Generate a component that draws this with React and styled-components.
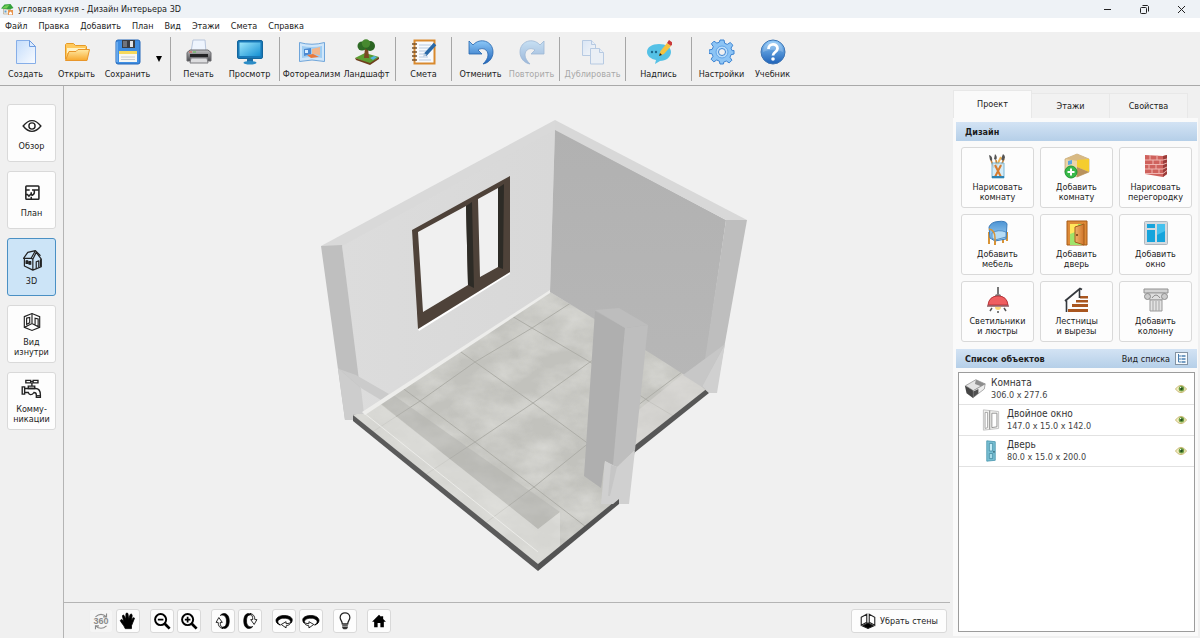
import React from 'react';
import styled, { createGlobalStyle, css } from 'styled-components';

const GlobalStyle = createGlobalStyle`
  * {
    box-sizing: border-box;
  }

  body {
    margin: 0;
    background-color: #f0f0f0;
    color: #1c1c1c;
    font-family: 'DejaVu Sans Condensed', 'Noto Sans', sans-serif;
    font-size: 9px;
    line-height: 10px;
  }

  button {
    font: inherit;
    color: inherit;
    padding: 0;
    border: 0;
    background: none;
  }

  svg {
    display: block;
  }

  h2, p, ul {
    margin: 0;
    padding: 0;
  }
`;

/* ---------- Icons ---------- */

const Icon = ({ size = 26, children }) => (
  <svg width={size} height={size} viewBox='0 0 26 26' fill='none' aria-hidden='true'>
    {children}
  </svg>
);

const GradientDefs = styled.svg`
  position: absolute;
`;

const Gradients = () => (
  <GradientDefs width='0' height='0' aria-hidden='true'>
    <defs>
      <linearGradient id='paper' x1='0' y1='0' x2='1' y2='1'>
        <stop offset='0' stopColor='#c3dcfb' />
        <stop offset='1' stopColor='#fafcff' />
      </linearGradient>
      <linearGradient id='folder' x1='0' y1='0' x2='0' y2='1'>
        <stop offset='0' stopColor='#ffe9a3' />
        <stop offset='1' stopColor='#f7a82d' />
      </linearGradient>
      <linearGradient id='blue' x1='0' y1='0' x2='0' y2='1'>
        <stop offset='0' stopColor='#8cc8f8' />
        <stop offset='1' stopColor='#1e62b8' />
      </linearGradient>
      <linearGradient id='screen' x1='0' y1='0' x2='1' y2='1'>
        <stop offset='0' stopColor='#9be6fb' />
        <stop offset='1' stopColor='#1590d4' />
      </linearGradient>
      <linearGradient id='metal' x1='0' y1='0' x2='0' y2='1'>
        <stop offset='0' stopColor='#c2c2c4' />
        <stop offset='1' stopColor='#47474b' />
      </linearGradient>
      <linearGradient id='wood' x1='0' y1='0' x2='1' y2='0'>
        <stop offset='0' stopColor='#f0b26c' />
        <stop offset='1' stopColor='#cf7428' />
      </linearGradient>
      <linearGradient id='seat' x1='0' y1='0' x2='0' y2='1'>
        <stop offset='0' stopColor='#4b93d4' />
        <stop offset='1' stopColor='#a9d7f5' />
      </linearGradient>
    </defs>
  </GradientDefs>
);

const LogoIcon = () => (
  <Icon size={13}>
    <path d='M5 12h14v10H5z' fill='#f4efe2' stroke='#9a8a70' />
    <path d='M0 11 7 3l12-1 6 8-8 3z' fill='#32a13c' />
    <path d='m3 10 6-5 8-1-6 7z' fill='#72cc55' />
    <path d='M7 15h4v4H7z' fill='#5d9ed6' />
    <path d='M14 14h10v10H14z' fill='#e79550' />
    <path d='m16 20 3-3 3 3v3h-6z' fill='#fff' />
  </Icon>
);

const NewIcon = () => (
  <Icon>
    <path d='M3.500 1.500h13l6 6v17h-19z' fill='url(#paper)' stroke='#86aee8' />
    <path d='M16.500 1.500v6h6z' fill='#dcebff' stroke='#6f9de0' />
  </Icon>
);

const OpenIcon = () => (
  <Icon>
    <path d='M1.500 20V5.500l1-1h7l2 2h10l1 1V20z' fill='#ffc95c' stroke='#e59a28' />
    <path d='M3 9h18v5H3z' fill='#fff2c4' />
    <path d='M1.500 21.500 5 12.500h7l2-2h11.500l-2.500 11z' fill='url(#folder)' stroke='#e8962a' />
  </Icon>
);

const SaveIcon = () => (
  <Icon>
    <rect x='1' y='1' width='24' height='24' rx='2' fill='#3f8ee2' stroke='#2467b8' />
    <path d='M7 1h13v8H7z' fill='#3a3d42' />
    <path d='M15 2h3v6h-3z' fill='#dfe3e8' />
    <path d='M8 2h4v6H8z' fill='#6f747c' />
    <path d='M4 12h18v11H4z' fill='#f7f7f2' />
    <path d='M4 12h18v3H4z' fill='#f5d95c' />
    <path d='M6 18h14M6 20.500h14' stroke='#c6ccd2' />
    <path d='M2 3v20' stroke='#8fc8ff' />
  </Icon>
);

const PrintIcon = () => (
  <Icon>
    <path d='m7 1 12 0 1 12H5z' fill='#eef4fd' stroke='#b9c6dc' />
    <path d='M1 13.500 4 11h18l3 2.500V22H1z' fill='url(#metal)' stroke='#6a6a6e' />
    <path d='M4 15h18v3H4z' fill='#242426' />
    <path d='M5 19h16l1 5H4z' fill='#dcdcde' stroke='#7c7c80' />
    <path d='M3 13h3' stroke='#e05848' />
    <path d='M7 13h3' stroke='#58c04e' />
  </Icon>
);

const PreviewIcon = () => (
  <Icon>
    <rect x='.5' y='1.500' width='25' height='18' rx='1.500' fill='#1979b8' stroke='#14669c' />
    <path d='M2.500 3.500h21v13.500h-21z' fill='url(#screen)' />
    <path d='M10 20h6v3h-6z' fill='#1c6ea5' />
    <ellipse cx='13' cy='23.800' rx='6.500' ry='1.800' fill='#2b8cc6' />
  </Icon>
);

const PhotoIcon = () => (
  <Icon>
    <path d='M.5 3.500Q13 7 25.500 3.500v19Q13 19.500.5 22.500z' fill='#cfe6fa' stroke='#6fa5da' />
    <path d='M3 7q10 2 20 0v12q-10-2-20 0z' fill='#9fcdf2' />
    <path d='m5 10 7-1v6l-7 2z' fill='#4b89d2' />
    <path d='m13 10 8-2v8l-8-1z' fill='#f1b68c' />
    <path d='m8 16 6-1 6 3-8 1z' fill='#e9783a' />
    <path d='M6 11h3v3H6z' fill='#d8edff' />
  </Icon>
);

const TreeIcon = () => (
  <Icon>
    <path d='M1 19 11 14l14 4-9 7z' fill='#5c9d31' />
    <path d='m1 19 15 5v2L2 21zM16 24l9-6v2l-9 6z' fill='#6d3f1c' />
    <path d='M11 9h3l1 10h-5z' fill='#7a4922' />
    <circle cx='8' cy='7' r='4.500' fill='#2f6b25' />
    <circle cx='16' cy='7' r='5' fill='#2c6523' />
    <circle cx='12' cy='4.500' r='4.200' fill='#47892f' />
    <path d='m16 19 4-2 3 1-4 3z' fill='#53b4e3' />
  </Icon>
);

const EstimateIcon = () => (
  <Icon>
    <rect x='3.500' y='1.500' width='20' height='23' fill='#f8fafd' stroke='#d98a2e' strokeWidth='2' />
    <path d='M8 6h12M8 9h12M8 12h10M8 15h8M8 18h9M8 21h12' stroke='#b8cae0' />
    <path d='M1 5h5M1 9h5M1 13h5M1 17h5M1 21h5' stroke='#77512c' strokeWidth='1.500' />
    <path d='M24 5 14 16' stroke='#2a69a8' strokeWidth='3.500' />
    <path d='m12 18 1-4 3 2z' fill='#b9ccdf' />
  </Icon>
);

const UndoShape = () => (
  <path
    d='M1 2v13h13l-4-4c4-3 10-1 10 5 0 3-2 6-5 9 6-1 10-6 10-12C25 2 12-2 5 6z'
    fill='url(#blue)'
    stroke='#2565ad'
    strokeWidth='.8'
  />
);

const UndoIcon = () => (
  <Icon>
    <UndoShape />
  </Icon>
);

const RedoIcon = () => (
  <Icon>
    <g transform='translate(26 0) scale(-1 1)' opacity='.4'>
      <UndoShape />
    </g>
  </Icon>
);

const CopyIcon = () => (
  <Icon>
    <g opacity='.5' stroke='#7fa5d6' fill='url(#paper)'>
      <path d='M2.500 1.500h9l4 4v11h-13z' />
      <path d='M11.500 1.500v4h4' />
      <path d='M10.500 9.500h9l4 4v11.500h-13z' fill='#e6effa' />
      <path d='M19.500 9.500v4h4' />
    </g>
  </Icon>
);

const NoteIcon = () => (
  <Icon>
    <path d='M1 13c0-5 5-8 12-8s12 3 12 8-5 9-11 9l-5 3 1-4c-5-1-9-4-9-8z' fill='#55c1e6' />
    <circle cx='6' cy='13' r='1.200' fill='#1d688d' />
    <circle cx='10' cy='13' r='1.200' fill='#1d688d' />
    <path d='m13 17 1.500-5L21 4l4 3-7 8z' fill='#f6c33f' />
    <path d='m21 4 2-3 4 3-2 3z' fill='#c93a3a' />
    <path d='m13 17 1-3 2 2z' fill='#222' />
  </Icon>
);

const GearIcon = () => (
  <Icon>
    <g stroke='#3d84d2' strokeWidth='1'>
      <path
        d='M11 1h4l.7 3.300 2.600 1.100 2.900-1.900 2.700 2.700-1.900 2.900 1.100 2.600L25 11.500v3.500l-3 .7-1 2.600 1.900 2.900-2.700 2.700-2.900-1.900-2.600 1.100L14.500 25h-3.500l-.7-2.900-2.600-1.100-2.900 1.900-2.700-2.700L4 17.300l-1.100-2.600L0 14.500V11l3.200-.7 1.100-2.600-1.900-2.900L5 2.200l2.900 1.900 2.500-1z'
        fill='#8cc4f5'
      />
      <circle cx='13' cy='13' r='6' fill='#b7dcfb' stroke='#62a4e6' />
      <circle cx='13' cy='13' r='3.500' fill='#f0f0f0' />
    </g>
  </Icon>
);

const HelpIcon = () => (
  <Icon>
    <circle cx='13' cy='13' r='12' fill='url(#blue)' stroke='#3f75b4' />
    <path d='M3 13C3-1 23-1 23 13c-7-3-13-3-20 0z' fill='#fff' opacity='.2' />
    <path d='M8.500 10c0-6 9-6 9-.5 0 3.500-4.500 3.500-4.500 7' stroke='#fff' strokeWidth='2.800' />
    <circle cx='13' cy='20' r='1.800' fill='#fff' />
  </Icon>
);

const EyeIcon = () => (
  <Icon size={20}>
    <g stroke='#222' strokeWidth='1.800'>
      <path d='M1.500 13Q7 6 13 6t11.500 7Q19 20 13 20T1.500 13z' />
      <circle cx='13' cy='13' r='4' />
    </g>
  </Icon>
);

const PlanIcon = () => (
  <Icon size={20}>
    <g stroke='#222' strokeWidth='2'>
      <rect x='5' y='4' width='17' height='17' rx='1' />
      <path d='M5 9h5M13 9h9M16 9v4q-1 3-4 3M5 15h2l2 2 3-3v-2M12 18v3' />
    </g>
  </Icon>
);

const HouseIcon = () => (
  <Icon size={22}>
    <g stroke='#222' strokeWidth='1.400' strokeLinejoin='round'>
      <path d='m3 11 5-7 9-2-5 9z' />
      <path d='M4 11v9l10 5V12l4-8 6 8v9l-10 4' />
      <path d='m12 11 2 1M18 23v-8l3-1v8M23 12v9M17 2l6 6' />
      <path d='M6 14h2v3H6zM9.500 15h2v3h-2z' fill='#222' />
    </g>
  </Icon>
);

const InsideIcon = () => (
  <Icon size={20}>
    <g stroke='#222' strokeWidth='1.500'>
      <path d='M3 6 13 2l10 4v14l-10 4-10-4z' />
      <path d='m3 20 10-5 10 5M13 2v13M6 8l4-1v7l-4 2zM17 17V8l4 1v10' />
    </g>
  </Icon>
);

const TapIcon = () => (
  <Icon size={21}>
    <g stroke='#222' strokeWidth='1.700'>
      <path d='M6 3h6v3H6zM15 3h6v3h-6zM12 4.500h3M13.500 6v4M9 10h8v3H9z' />
      <path d='M1.500 11h3v9h-3zM4.500 13H18c5 0 6 3 6 8v3h-5v-3c0-2-1-3-3-3-3 4-6 3-7 0H4.500' />
      <path d='M18.500 22h6' />
    </g>
  </Icon>
);

const BrushesIcon = () => (
  <Icon>
    <path d='m9 15-3-8M12 15l-1-8M15 15l4-9' stroke='#c9853a' strokeWidth='1.600' />
    <path d='M4 2q4 1 3 6L5 7zM10 1q3 3 1 6l-2-1zM18 1q4 3 0 7l-2-2z' fill='#555' />
    <path d='M12 12 16 4' stroke='#efb04d' strokeWidth='2' />
    <path d='M7 10h12v15H7z' fill='#cbe8f8' opacity='.8' stroke='#5ba5cb' />
    <path d='m10 12 6 12M16 12l-6 12' stroke='#d77b2d' strokeWidth='2' />
    <path d='M7 24h12' stroke='#2e84b4' strokeWidth='2' />
  </Icon>
);

const AddRoomIcon = () => (
  <Icon>
    <path d='M1 6 13 1l12 5v13l-12 5-12-5z' fill='#ecd5a7' stroke='#b49460' strokeWidth='.6' />
    <path d='m1 6 12-5 12 5-11 2z' fill='#d8b983' />
    <path d='m13 7 12-1v13l-12-5z' fill='#f5cd2e' />
    <path d='m13 14 12 5-12 5z' fill='#b9925c' />
    <path d='m4 8 4-1v4l-4 1z' fill='#5fa6dd' />
    <circle cx='7' cy='19' r='6' fill='#38b948' stroke='#1f9632' />
    <path d='M7 15.500v7M3.500 19h7' stroke='#fff' strokeWidth='2' />
  </Icon>
);

const BricksIcon = () => (
  <Icon>
    <path d='m2 2 18 1 4-1v19l-4 3-18-3z' fill='#cf625d' />
    <path d='M20 3l4-1v19l-4 3z' fill='#9b3c3a' />
    <path
      d='M2 7h18l4-1M2 11.500h18l4-1.500M2 16h18l4-2M2 20.500h18l4-3M7 2v5M14 2v5M10 7v4.500M17 7v4.500M6 11.500V16M13 11.500V16M9 16v4.500M16 16v4.500'
      stroke='#f0b5b0'
    />
  </Icon>
);

const ChairIcon = () => (
  <Icon>
    <path d='M4 12v12M22 12v9M10 15v10M18 18v5' stroke='#d99436' strokeWidth='2' />
    <path d='M4 7Q6 2 13 1.500q8-1 9 2.500l-1 15-11 2-5-3z' fill='url(#seat)' stroke='#3c7cba' />
    <path d='M7 13q6-4 14-1v5l-11 3-3-2z' fill='#b5dcf6' stroke='#4382bd' strokeWidth='.8' />
    <path d='M4 9q6 1 6 9v7' stroke='#d99436' strokeWidth='1.500' />
  </Icon>
);

const DoorIcon = () => (
  <Icon>
    <path d='M3 1h20v24H3z' fill='#dd8a37' stroke='#a75b18' />
    <path d='M6 4h14v21H6z' fill='#9fe36a' />
    <path d='M6 4h8v7l-8 3z' fill='#ffe65c' />
    <path d='m11 7 9-3v21l-9-3z' fill='url(#wood)' stroke='#a45c1d' />
    <circle cx='13' cy='15' r='1' fill='#6d3c10' />
  </Icon>
);

const WindowIcon = () => (
  <Icon>
    <rect x='1.500' y='1.500' width='23' height='23' rx='1' fill='#d4dadf' stroke='#aeb7bf' />
    <path d='M4 4h8v4H4zM4 10h8v12H4zM14 4h8v18h-8z' fill='#16a4dc' />
    <path d='M14 4h8v7l-8 4z' fill='#44c1ee' />
  </Icon>
);

const LampIcon = () => (
  <Icon>
    <path d='M13 0v7' stroke='#555' strokeWidth='1.600' />
    <path d='M10 9q0-2 3-2t3 2z' fill='#777' />
    <path d='M3 18q1-9 10-9t10 9z' fill='#ef5f60' stroke='#b63238' />
    <path d='M2 19h22' stroke='#74333a' strokeWidth='1.200' />
    <path d='M10 20h6q0 3-3 3t-3-3z' fill='#f8d77a' />
    <path d='M7 21l-2 3M13 24v2M19 21l2 3' stroke='#555' strokeWidth='1.500' />
  </Icon>
);

const StairsIcon = () => (
  <Icon>
    <path d='M16 9h8v2.500h-8zM12 13h12v2.500H12zM8 17h16v3H8zM4 22h20v3H4z' fill='#a9561f' />
    <path d='M2.500 25V13.500M15.500 2v9' stroke='#34383d' strokeWidth='1.600' />
    <path d='M1 14 16 1.500l2 1' stroke='#34383d' strokeWidth='1.800' />
  </Icon>
);

const ColumnIcon = () => (
  <Icon>
    <path d='M1 2h24v4H1z' fill='#d3d3d3' stroke='#919191' />
    <path d='M4 6h18l-3 7H7z' fill='#dedede' stroke='#a0a0a0' />
    <circle cx='4.500' cy='9.500' r='3' fill='#ccc' stroke='#8e8e8e' />
    <circle cx='21.500' cy='9.500' r='3' fill='#ccc' stroke='#8e8e8e' />
    <path d='M9 11q4-6 8 0' stroke='#8e8e8e' />
    <path d='M7 13h12v11H7z' fill='#e3e3e3' stroke='#999' />
    <path d='M10 14v10M13 14v10M16 14v10' stroke='#a5a5a5' />
  </Icon>
);

const Rotate360Icon = () => (
  <Icon size={18}>
    <g stroke='#8a8a8a' strokeWidth='1.600'>
      <path d='M5 7q8-7 16 0M21 2v5h-5M21 20q-8 7-16 0M5 25v-5h5' />
    </g>
    <text x='13' y='18' fontSize='13' fontWeight='bold' textAnchor='middle' fill='#8a8a8a' fontFamily='Liberation Sans'>
      360
    </text>
  </Icon>
);

const HandIcon = () => (
  <Icon size={18}>
    <path
      d='M9 24C7 18 2 15 2 12c1-2 3-1 5 2L5 6c0-2 2-2 3 0l2 5V3c0-2 3-2 3 0l1 8 2-7c1-2 3-1 3 1l-1 8 2-4c1-1 3-1 2 1l-4 10v4z'
      fill='#000'
      stroke='#000'
      strokeWidth='1.200'
    />
  </Icon>
);

const ZoomGlyph = ({ plus }) => (
  <Icon size={18}>
    <circle cx='11' cy='11' r='8' stroke='#000' strokeWidth='2.800' />
    <path d='m17 17 7 7' stroke='#000' strokeWidth='4' />
    <path d={plus ? 'M7 11h8M11 7v8' : 'M7 11h8'} stroke='#000' strokeWidth='2.500' />
  </Icon>
);

const TiltGlyph = ({ down }) => (
  <Icon size={18}>
    <g transform={down ? 'rotate(180 13 13)' : undefined}>
      <path d='M9 5C13 0 22 1 22 13c0 10-6 13-11 9 6 0 7-4 7-9 0-6-3-10-9-8z' fill='#000' stroke='#000' />
      <path d='M13 24C8 23 6 20 6 15H3l4-7 5 7H9c0 4 1 7 4 9z' fill='#fff' stroke='#000' strokeWidth='1.200' />
    </g>
  </Icon>
);

const OrbitGlyph = ({ right }) => (
  <Icon size={18}>
    <g transform={right ? 'translate(26 0) scale(-1 1)' : undefined}>
      <path d='M4 17C-2 12 3 5 13 5s15 5 10 11c0-5-4-7-10-7S3 12 4 17z' fill='#000' stroke='#000' />
      <path d='M24 14q-3 6-8 6v3l-7-5 7-4v3q5 0 8-3z' fill='#fff' stroke='#000' strokeWidth='1.200' />
      <path d='M3 14q1 4 5 5' stroke='#000' strokeWidth='2' />
    </g>
  </Icon>
);

const BulbIcon = () => (
  <Icon size={18}>
    <path d='M9 17c0-4-3-5-3-9 0-9 14-9 14 0 0 4-3 5-3 9z' stroke='#222' strokeWidth='1.800' />
    <path d='M9 18h8v5l-2 2h-4l-2-2z' fill='#333' />
    <path d='M9 20.500h8' stroke='#fff' />
  </Icon>
);

const HomeIcon = () => (
  <Icon size={18}>
    <path d='M13 4 3 14h3v8h5v-6h4v6h5v-8h3l-4-4V6h-3v1z' fill='#000' />
  </Icon>
);

const WallsIcon = () => (
  <Icon size={16}>
    <g stroke='#222' strokeWidth='1.800'>
      <path d='M2 7 11 2v13l-9 5zM15 2l9 5v13l-9-5z' />
      <path d='m4 21 9-5 9 5-9 4z' fill='#000' />
    </g>
  </Icon>
);

const TreeListIcon = () => (
  <Icon size={13}>
    <rect x='1' y='1' width='24' height='24' fill='#f6fafd' stroke='#8493a2' strokeWidth='2' />
    <path d='M7 4v16M7 8h5M7 14h5M7 20h5' stroke='#4b7fb0' strokeWidth='2' />
    <path d='M13 8h8M13 14h8M13 20h8' stroke='#4b7fb0' strokeWidth='3' />
  </Icon>
);

const VisibleIcon = () => (
  <Icon size={12}>
    <path d='M1 13Q7 5 13 5t12 8Q19 21 13 21T1 13z' fill='#f1edbf' stroke='#c4b46c' strokeWidth='2' />
    <circle cx='14' cy='12.500' r='6' fill='#6f9d42' />
    <circle cx='14' cy='12.500' r='3' fill='#23501f' />
    <circle cx='12' cy='10' r='1.500' fill='#fff' />
  </Icon>
);

const RoomThumb = () => (
  <Icon size={22}>
    <path d='M2 9 14 2l11 5-14 8z' fill='#e4e4e4' stroke='#999' />
    <path d='M14 2 25 7l-4 3-8-3z' fill='#8d8d8d' />
    <path d='m1 9 10 6v9L3 18z' fill='#454545' />
    <path d='m11 15 14-8-1 6-13 10z' fill='#eee' stroke='#888' strokeWidth='.8' />
    <path d='m11 16 6-3v5l-6 5z' fill='#505050' />
  </Icon>
);

const WindowThumb = () => (
  <Icon size={22}>
    <path d='m4 1 18 2v20L4 25z' fill='#f3f3f1' stroke='#bbb' />
    <path d='M6 4h3v18l-3 1z' fill='#fff' stroke='#999' />
    <path d='M14 5h6v16l-6 1z' fill='#fff' stroke='#888' />
    <path d='M11.500 2v22' stroke='#777' />
  </Icon>
);

const DoorThumb = () => (
  <Icon size={22}>
    <path d='m8 1 10 1v22l-10 1z' fill='#79bfd3' stroke='#4b98b0' />
    <path d='M11 4h4v9h-4z' fill='#c4ebf5' stroke='#438da4' />
    <path d='M11 16h4v6h-4z' fill='#a6dae8' stroke='#438da4' />
    <circle cx='16.500' cy='14' r='1' fill='#315f6e' />
  </Icon>
);

/* ---------- 3D room ---------- */

const floorOutline = '550,292 707,386 709,389 636,449 619,499 538,566 353,415 364,412';

function RoomScene() {
  return (
    <Scene viewBox='64 86 886 516' role='img' aria-label='3D'>
      <defs>
        <clipPath id='floorClip'>
          <polygon points={floorOutline} />
        </clipPath>
        <filter id='concrete' x='0' y='0' width='100%' height='100%'>
          <feTurbulence type='fractalNoise' baseFrequency='.025 .04' numOctaves='4' seed='7' />
          <feColorMatrix values='0 0 0 0 .84  0 0 0 0 .84  0 0 0 0 .81  1.600 0 0 0 -.5' />
        </filter>
        <linearGradient id='leftFace' x1='0' y1='0' x2='1' y2='0'>
          <stop offset='0' stopColor='#dcdcdc' />
          <stop offset='1' stopColor='#d8d8d8' />
        </linearGradient>
        <linearGradient id='rightFace' x1='0' y1='0' x2='0' y2='1'>
          <stop offset='0' stopColor='#b1b1b1' />
          <stop offset='1' stopColor='#b7b7b7' />
        </linearGradient>
      </defs>

      {/* floor */}
      <polygon points={floorOutline} fill='#c2c2bd' />
      <g clipPath='url(#floorClip)'>
        <rect x='340' y='285' width='380' height='290' filter='url(#concrete)' opacity='.6' />
        <g fill='none' stroke='#adada7' strokeWidth='1'>
          <path d='M382 373 420 401 475 442 534 487 590 530' />
          <path d='M440 337 475 362 533 403 586 442 640 482' />
          <path d='M500 309 532 328 590 362 650 402 690 426' />
          <path d='M360 440 420 401 475 362 532 328 580 297' />
          <path d='M425 475 475 442 533 403 590 362 640 330' />
          <path d='M484 524 534 487 585 446 650 396 690 366' />
        </g>
        <path d='M389 392 560 512 538 529 355 383z' fill='#b2b1ae' opacity='.5' />
        <path d='M340 372 538 529 560 512V547L538 568 345 415z' fill='#e2e2e0' opacity='.6' />
        <path d='M364 413 538 552' stroke='#ecece9' strokeWidth='1' />
        <path d='M636 412 712 350V392L620 470z' fill='#dfdddb' opacity='.5' />
      </g>
      <path d='M353 415 538 564 538 571 353 421z' fill='#5a5a5a' />
      <path d='M538 564 619 498V504L538 571z' fill='#535353' />
      <path d='M634 446 709 387V393L634 453z' fill='#575757' />

      {/* left wall */}
      <path d='M342 245 555 128 550 292 361 414z' fill='url(#leftFace)' />
      <path d='M321 246 555 120V130L342 246z' fill='#d9d9d9' />
      <path d='M321 246 342 245 363 412 354 415 345 420z' fill='#bfbfbf' />
      <path d='M338 368 361 388 364 414 353 414V420H345z' fill='#cdcdcd' />
      <path d='M339 369 356 375 389 394 381 400 361 388z' fill='#cbcbcb' />
      <path d='M550 290V293L365 415 362 412z' fill='#ededeb' />

      {/* window */}
      <path d='M418 329 510 272V274L419 331z' fill='#fff' />
      <path d='M412 230 510 176V272L418 329z' fill='#4e4239' />
      <path d='M418 232 466 206 468 285 423 312zM478 199 498 188V267L480 277z' fill='#f0f0f0' />
      <path d='M466 206 472 202 474 288 468 285zM498 188 504 184 503 269 498 267z' fill='#2d2b26' />

      {/* right wall */}
      <path d='M555 129 726 220 702 386 650 353 550 292z' fill='url(#rightFace)' />
      <path d='M555 120 747 220H726L555 130z' fill='#d8d8d8' />
      <path d='M726 220H747L716 393H709L701 386z' fill='#bebebe' />
      <path d='M725 344 717 393H709L702 386z' fill='#d0d0d0' />
      <path d='M725 344 683 375 702 387z' fill='#c7c7c7' />

      {/* wall stub by the doorway */}
      <path d='M595 311 625 328 615 467 605 461 601 488 584 476z' fill='#afafaf' />
      <path d='M595 310 619 308 648 325 625 328z' fill='#bdbdbd' />
      <path d='M625 328 648 325 635 450 617 467 613 465z' fill='#bebebe' />
      <path d='M605 461 617 467 635 450 629 504H619V499L613 504H601z' fill='#d0d0d0' />
      <path d='M611 465 617 467 610 496 608 496z' fill='#c6c6c6' />
    </Scene>
  );
}

/* ---------- Data ---------- */

const menu = ['Файл', 'Правка', 'Добавить', 'План', 'Вид', 'Этажи', 'Смета', 'Справка'];

const toolGroups = [
  {
    padding: '0 5px 0 0',
    more: true,
    tools: [
      { label: 'Создать', icon: NewIcon },
      { label: 'Открыть', icon: OpenIcon },
      { label: 'Сохранить', icon: SaveIcon },
    ],
  },
  {
    padding: '0 4px 0 2px',
    tools: [
      { label: 'Печать', icon: PrintIcon },
      { label: 'Просмотр', icon: PreviewIcon },
    ],
  },
  {
    padding: '0 1px 0 4px',
    wide: true,
    tools: [
      { label: 'Фотореализм', icon: PhotoIcon },
      { label: 'Ландшафт', icon: TreeIcon },
    ],
  },
  { padding: '0 2px', tools: [{ label: 'Смета', icon: EstimateIcon }] },
  {
    padding: '0 2px 0 3px',
    tools: [
      { label: 'Отменить', icon: UndoIcon },
      { label: 'Повторить', icon: RedoIcon, disabled: true },
    ],
  },
  { padding: '0 5px', wide: true, tools: [{ label: 'Дублировать', icon: CopyIcon, disabled: true }] },
  { padding: '0 5px', wide: true, tools: [{ label: 'Надпись', icon: NoteIcon }] },
  {
    padding: '0 4px',
    tools: [
      { label: 'Настройки', icon: GearIcon },
      { label: 'Учебник', icon: HelpIcon },
    ],
  },
];

const views = [
  { lines: ['Обзор'], icon: EyeIcon },
  { lines: ['План'], icon: PlanIcon },
  { lines: ['3D'], icon: HouseIcon, active: true },
  { lines: ['Вид', 'изнутри'], icon: InsideIcon },
  { lines: ['Комму-', 'никации'], icon: TapIcon },
];

const designTools = [
  { lines: ['Нарисовать', 'комнату'], icon: BrushesIcon },
  { lines: ['Добавить', 'комнату'], icon: AddRoomIcon },
  { lines: ['Нарисовать', 'перегородку'], icon: BricksIcon },
  { lines: ['Добавить', 'мебель'], icon: ChairIcon },
  { lines: ['Добавить', 'дверь'], icon: DoorIcon },
  { lines: ['Добавить', 'окно'], icon: WindowIcon },
  { lines: ['Светильники', 'и люстры'], icon: LampIcon },
  { lines: ['Лестницы', 'и вырезы'], icon: StairsIcon },
  { lines: ['Добавить', 'колонну'], icon: ColumnIcon },
];

const cameraGroups = [
  [
    { name: 'Поворот 360', icon: <Rotate360Icon />, disabled: true },
    { name: 'Переместить', icon: <HandIcon /> },
  ],
  [
    { name: 'Уменьшить', icon: <ZoomGlyph /> },
    { name: 'Увеличить', icon: <ZoomGlyph plus /> },
  ],
  [
    { name: 'Наклон вверх', icon: <TiltGlyph /> },
    { name: 'Наклон вниз', icon: <TiltGlyph down /> },
  ],
  [
    { name: 'Вращать влево', icon: <OrbitGlyph /> },
    { name: 'Вращать вправо', icon: <OrbitGlyph right /> },
  ],
  [{ name: 'Освещение', icon: <BulbIcon /> }],
  [{ name: 'Исходный вид', icon: <HomeIcon /> }],
];

const objects = [
  { name: 'Комната', size: '306.0 x 277.6', icon: RoomThumb },
  { name: 'Двойное окно', size: '147.0 x 15.0 x 142.0', icon: WindowThumb, nested: true },
  { name: 'Дверь', size: '80.0 x 15.0 x 200.0', icon: DoorThumb, nested: true },
];

const Lines = ({ lines }) => (
  <span>
    {lines.map((line, i) => (
      <React.Fragment key={line}>
        {i > 0 && <br />}
        {line}
      </React.Fragment>
    ))}
  </span>
);

/* ---------- App ---------- */

function App() {
  return (
    <Shell>
      <GlobalStyle />
      <Gradients />

      <TitleBar>
        <LogoIcon />
        <Title>угловая кухня - Дизайн Интерьера 3D</Title>
        <WindowButton aria-label='Свернуть'>
          <svg width='9' height='9' stroke='#222'>
            <path d='M1 4.500h7' />
          </svg>
        </WindowButton>
        <WindowButton aria-label='Восстановить'>
          <svg width='9' height='9' fill='none' stroke='#222'>
            <rect x='.5' y='2.500' width='6' height='6' rx='1' />
            <path d='M2.500.5h5l1 1v5' />
          </svg>
        </WindowButton>
        <WindowButton aria-label='Закрыть'>
          <svg width='9' height='9' stroke='#222'>
            <path d='m1 1 7 7M8 1 1 8' />
          </svg>
        </WindowButton>
      </TitleBar>

      <MenuBar>
        {menu.map((item) => (
          <button key={item}>{item}</button>
        ))}
      </MenuBar>

      <Toolbar>
        {toolGroups.map((group, i) => (
          <ToolGroup key={i} $padding={group.padding}>
            {group.tools.map(({ label, icon: ToolIcon, disabled }) => (
              <ToolButton key={label} $wide={group.wide} disabled={disabled}>
                <ToolIcon />
                {label}
              </ToolButton>
            ))}
            {group.more && (
              <MoreButton aria-label='Ещё'>
                <svg width='6' height='6'>
                  <path d='M0 0h6L3 6z' />
                </svg>
              </MoreButton>
            )}
          </ToolGroup>
        ))}
      </Toolbar>

      <Workspace>
        <ViewBar>
          {views.map(({ lines, icon: ViewIcon, active }) => (
            <ViewButton key={lines[0]} $active={active}>
              <ViewIcon />
              <Lines lines={lines} />
            </ViewButton>
          ))}
        </ViewBar>

        <Stage>
          <RoomScene />
          <CameraBar>
            {cameraGroups.map((group, i) => (
              <CameraGroup key={i}>
                {group.map(({ name, icon, disabled }) => (
                  <CameraButton key={name} aria-label={name} disabled={disabled}>
                    {icon}
                  </CameraButton>
                ))}
              </CameraGroup>
            ))}
            <WallsButton>
              <WallsIcon />
              Убрать стены
            </WallsButton>
          </CameraBar>
        </Stage>

        <SidePanel>
          <Tabs role='tablist'>
            <Tab role='tab' aria-selected='true' $active>
              Проект
            </Tab>
            <Tab role='tab'>Этажи</Tab>
            <Tab role='tab'>Свойства</Tab>
          </Tabs>
          <PanelBody>
            <PanelHeader>
              <h2>Дизайн</h2>
            </PanelHeader>
            <TileGrid>
              {designTools.map(({ lines, icon: TileIcon }) => (
                <Tile key={lines.join()}>
                  <TileIcon />
                  <Lines lines={lines} />
                </Tile>
              ))}
            </TileGrid>
            <PanelHeader>
              <h2>Список объектов</h2>
              <ListMode>
                Вид списка
                <TreeListIcon />
              </ListMode>
            </PanelHeader>
            <ObjectList>
              {objects.map(({ name, size, icon: Thumb, nested }) => (
                <ObjectRow key={name} $nested={nested}>
                  <Thumb />
                  <ObjectText>
                    <strong>{name}</strong>
                    <p>{size}</p>
                  </ObjectText>
                  <button aria-label={`Показать: ${name}`}>
                    <VisibleIcon />
                  </button>
                </ObjectRow>
              ))}
            </ObjectList>
          </PanelBody>
        </SidePanel>
      </Workspace>
    </Shell>
  );
}

const Shell = styled.div`
  display: flex;
  flex-direction: column;
  min-height: 100vh;
`;

const TitleBar = styled.header`
  display: flex;
  align-items: center;
  height: 18px;
  padding-left: 1px;
  background-color: #eef2f6;
`;

const Title = styled.span`
  flex: 1;
  padding-left: 4px;
`;

const WindowButton = styled.button`
  display: flex;
  align-items: center;
  justify-content: center;
  width: 37px;
  height: 18px;
`;

const MenuBar = styled.nav`
  display: flex;
  align-items: center;
  gap: 11px;
  height: 14px;
  padding-left: 5px;
  padding-top: 1px;
  background-color: #fff;
`;

const Toolbar = styled.div`
  display: flex;
  height: 54px;
  padding: 5px 0 4px;
  border-bottom: 1px solid #a9a9a9;
`;

const ToolGroup = styled.div`
  display: flex;
  padding: ${({ $padding }) => $padding};

  &:not(:last-child) {
    border-right: 1px solid #a6a6a6;
  }
`;

const ToolButton = styled.button`
  display: flex;
  flex-direction: column;
  align-items: center;
  gap: 4px;
  width: ${({ $wide }) => ($wide ? '55px' : '51px')};
  padding-top: 2px;
  white-space: nowrap;

  &:disabled {
    color: #a8a8a8;
  }
`;

const MoreButton = styled.button`
  display: flex;
  align-items: center;
  justify-content: center;
  width: 12px;
`;

const Workspace = styled.main`
  display: grid;
  grid-template-columns: 64px 1fr 250px;
  flex: 1;
`;

const ViewBar = styled.aside`
  display: flex;
  flex-direction: column;
  gap: 9px;
  padding: 18px 7px;
  border-right: 1px solid #b4b4b4;
`;

const card = css`
  background-color: #fdfdfd;
  border: 1px solid #d9d9d9;
  border-radius: 3px;
`;

const ViewButton = styled.button`
  ${card}
  display: flex;
  flex-direction: column;
  align-items: center;
  justify-content: center;
  gap: 5px;
  height: 58px;

  ${({ $active }) =>
    $active &&
    css`
      background-color: #cce4f7;
      border-color: #4a90c4;
    `}
`;

const Stage = styled.section`
  display: flex;
  flex-direction: column;
  min-width: 0;
`;

const Scene = styled.svg`
  flex: 1;
  width: 100%;
  min-height: 0;
`;

const CameraBar = styled.div`
  display: flex;
  align-items: center;
  gap: 10px;
  height: 36px;
  padding: 0 3px 0 25px;
  border-top: 1px solid #b4b4b4;
`;

const CameraGroup = styled.div`
  display: flex;
  gap: 3px;
`;

const CameraButton = styled.button`
  ${card}
  display: flex;
  align-items: center;
  justify-content: center;
  width: 24px;
  height: 24px;

  &:disabled {
    background-color: #f5f5f5;
    border-color: #efefef;
  }
`;

const WallsButton = styled.button`
  ${card}
  display: flex;
  align-items: center;
  gap: 4px;
  height: 24px;
  margin-left: auto;
  padding: 0 8px;
`;

const SidePanel = styled.aside`
  display: flex;
  flex-direction: column;
  padding: 4px 2px 2px 3px;
`;

const Tabs = styled.div`
  display: flex;
  align-items: flex-end;
  height: 28px;
  padding-right: 10px;
`;

const Tab = styled.button`
  flex: 1;
  height: 25px;
  background-color: #f2f2f2;
  border: 1px solid #e8e8e8;
  border-width: 1px 1px 0 0;

  ${({ $active }) =>
    $active &&
    css`
      height: 28px;
      background-color: #fafafa;
      border-left-width: 1px;
      padding-bottom: 2px;
    `}
`;

const PanelBody = styled.div`
  display: flex;
  flex: 1;
  flex-direction: column;
  padding: 4px 1px 4px 3px;
  background-color: #fafafa;
`;

const PanelHeader = styled.div`
  display: flex;
  align-items: center;
  justify-content: space-between;
  height: 19px;
  padding: 0 9px;
  background: linear-gradient(#d3e3f4, #b5cfe8);

  h2 {
    font-size: 9px;
    font-weight: bold;
  }
`;

const TileGrid = styled.div`
  display: grid;
  grid-template-columns: repeat(3, 1fr);
  gap: 6px;
  padding: 6px 5px 7px;
`;

const Tile = styled.button`
  ${card}
  display: flex;
  flex-direction: column;
  align-items: center;
  gap: 3px;
  height: 61px;
  padding-top: 5px;
`;

const ListMode = styled.button`
  display: flex;
  align-items: center;
  gap: 5px;
`;

const ObjectList = styled.ul`
  flex: 1;
  margin: 4px 2px 0;
  background-color: #fff;
  border: 1px solid #9c9c9c;
  list-style: none;
`;

const ObjectRow = styled.li`
  display: flex;
  align-items: center;
  height: 31px;
  padding: 0 7px 0 ${({ $nested }) => ($nested ? '21px' : '5px')};
  border-bottom: 1px solid #e2e2e2;

  &:first-child {
    height: 32px;
  }
`;

const ObjectText = styled.div`
  flex: 1;
  padding-left: 5px;
  color: #444;
  line-height: 12px;

  strong {
    display: block;
    color: #333;
    font-size: 10px;
    font-weight: normal;
  }
`;

export default App;
